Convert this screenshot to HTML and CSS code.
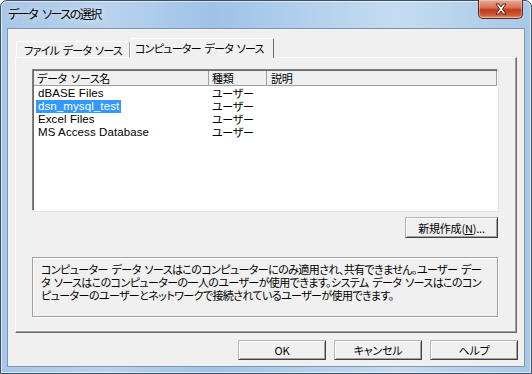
FILE: index.html
```html
<!DOCTYPE html>
<html lang="ja">
<head>
<meta charset="utf-8">
<title>データ ソースの選択</title>
<link rel="stylesheet" href="styles.css">
</head>
<body>
<div class="window">
  <div class="titlebar">
    <span class="title">データ ソースの選択</span>
    <div class="close">
      <svg width="18" height="12" viewBox="0 0 18 12"><path d="M4 1 L7 1 L9 4 L11 1 L14 1 L10.5 6 L14 11 L11 11 L9 8 L7 11 L4 11 L7.5 6 Z" fill="#fff" stroke="#5a1a10" stroke-width="1" stroke-linejoin="round"/></svg>
    </div>
  </div>
  <div class="client">
    <div class="tabs">
      <div class="tab">ファイル データ ソース</div>
      <div class="tab active">コンピューター データ ソース</div>
    </div>
    <div class="panel">
      <div class="listbox">
        <div class="lhead">
          <div class="c1">データ ソース名</div>
          <div class="c2">種類</div>
          <div class="c3">説明</div>
        </div>
        <div class="row"><div class="c1"><span>dBASE Files</span></div><div class="c2">ユーザー</div></div>
        <div class="row"><div class="c1"><span class="sel">dsn_mysql_test</span></div><div class="c2">ユーザー</div></div>
        <div class="row"><div class="c1"><span>Excel Files</span></div><div class="c2">ユーザー</div></div>
        <div class="row"><div class="c1"><span>MS Access Database</span></div><div class="c2">ユーザー</div></div>
      </div>
      <div class="newrow"><button class="btn newbtn">新規作成(<u>N</u>)...</button></div>
      <div class="desc">コンピューター データ ソースはこのコンピューターにのみ適用され、共有できません。ユーザー デー<br>タ ソースはこのコンピューターの一人のユーザーが使用できます。システム データ ソースはこのコン<br>ピューターのユーザーとネットワークで接続されているユーザーが使用できます。</div>
    </div>
    <div class="buttons">
      <button class="btn">OK</button>
      <button class="btn">キャンセル</button>
      <button class="btn">ヘルプ</button>
    </div>
  </div>
</div>
</body>
</html>
```
FILE: styles.css
```css
html, body {
  margin: 0;
  padding: 0;
  background: #fff;
}
body {
  width: 532px;
  height: 374px;
  overflow: hidden;
  font-family: "Noto Sans CJK JP", sans-serif;
  font-feature-settings: "palt";
  font-size: 11px;
  letter-spacing: -0.3px;
  word-spacing: 2px;
  color: #000;
}
.window {
  box-sizing: border-box;
  width: 532px;
  height: 374px;
  border: 1px solid #3d4f63;
  border-radius: 7px 7px 0 0;
  background: linear-gradient(90deg, #a7c6e6 0%, #b9d3ee 20%, #9fc2e6 40%, #b5d2ee 60%, #c4dcef 75%, #a8c8e8 100%);
  display: flex;
  flex-direction: column;
  box-shadow: inset 0 0 0 1px rgba(255,255,255,0.6);
}
.titlebar {
  height: 27px;
  display: flex;
  align-items: flex-start;
  justify-content: space-between;
  padding-left: 7px;
  padding-right: 8px;
}
.title {
  margin-top: 5px;
  font-size: 12px;
  letter-spacing: -1.5px;
  word-spacing: 4px;
  line-height: 16px;
  color: #000;
  text-shadow: 0 0 6px rgba(255,255,255,0.9);
}
.close {
  width: 43px;
  height: 18px;
  margin-top: -1px;
  border: 1px solid #5a2a22;
  border-top: none;
  border-radius: 0 0 5px 5px;
  background: linear-gradient(180deg, #e8a795 0%, #d8765c 40%, #c2391a 55%, #cf5b38 85%, #e59b72 100%);
  box-shadow: inset 0 0 0 1px rgba(255,255,255,0.35);
  display: flex;
  align-items: center;
  justify-content: center;
}
.close svg { display: block; }
.client {
  flex: 1;
  margin: 0 6px 6px 6px;
  border: 1px solid #7f95ab;
  background: #f0f0f0;
  padding: 9px 6px 0 7px;
  display: flex;
  flex-direction: column;
}
.tabs {
  display: flex;
  align-items: flex-end;
  height: 19px;
  padding-left: 1px;
}
.tab {
  height: 16px;
  line-height: 16px;
  padding: 0 7px 0 7px;
  border-top: 1px solid #fff;
  border-left: 1px solid #fff;
  border-right: 1px solid #a0a0a0;
  border-radius: 2px 2px 0 0;
  box-sizing: border-box;
  white-space: nowrap;
  letter-spacing: -0.75px;
}
.tab.active {
  height: 20px;
  line-height: 18px;
  padding: 0 9px 0 4px;
  margin-bottom: -1px;
  background: #f0f0f0;
  position: relative;
  z-index: 1;
  border-right: 1px solid #696969;
}
.panel {
  box-sizing: border-box;
  width: 502px;
  height: 276px;
  border-top: 1px solid #fff;
  border-left: 1px solid #fff;
  border-right: 1px solid #696969;
  border-bottom: 1px solid #696969;
  box-shadow: inset -1px -1px #a0a0a0;
  padding: 11px 0 0 16px;
}
.listbox {
  box-sizing: border-box;
  width: 466px;
  height: 142px;
  background: #fff;
  border-top: 1px solid #828282;
  border-left: 1px solid #828282;
  border-right: 1px solid #fff;
  border-bottom: 1px solid #fff;
  box-shadow: inset 1px 1px #696969, 1px 1px 0 #e3e3e3;
  overflow: hidden;
}
.lhead {
  display: flex;
  height: 15px;
  line-height: 14px;
  background: #f0f0f0;
  border-bottom: 1px solid #a0a0a0;
  box-sizing: border-box;
  margin: 1px 0 1px 1px;
  width: 463px;
}
.lhead > div {
  box-sizing: border-box;
  border-right: 1px solid #a0a0a0;
  padding-left: 3px;
  white-space: nowrap;
}
.c1 { width: 175px; }
.c2 { width: 58px; padding-left: 3px; }
.c3 { flex: 1; }
.lhead .c3 { padding-left: 4px; }
.row {
  display: flex;
  height: 13px;
  line-height: 13px;
  margin-left: 1px;
  white-space: nowrap;
}
.row .c1 {
  box-sizing: border-box;
  padding-left: 2px;
  font-family: "Liberation Sans", "Noto Sans CJK JP", sans-serif;
  font-size: 11.5px;
  letter-spacing: 0.1px;
  word-spacing: 0;
}
.row .c1 span { padding: 0 2px 0 2px; display: inline-block; height: 13px; }
.row .c2 { box-sizing: border-box; padding-left: 3px; }
.row .sel {
  background: #3399ff;
  color: #fff;
}
.newrow {
  width: 466px;
  display: flex;
  justify-content: flex-end;
  margin-top: 6px;
}
.btn {
  font-family: inherit;
  font-feature-settings: "palt";
  font-size: 11px;
  letter-spacing: -0.2px;
  color: #000;
  background: #f0f0f0;
  box-sizing: border-box;
  width: 88px;
  height: 20px;
  padding: 0;
  line-height: 16px;
  border: 1px solid;
  border-color: #b4b4b4 #404040 #404040 #b4b4b4;
  box-shadow: inset 1px 1px #fff, inset -1px -1px #a0a0a0;
  border-radius: 0;
}
.newbtn {
  width: 93px;
  height: 21px;
}
.desc {
  box-sizing: border-box;
  width: 466px;
  height: 60px;
  margin-top: 19px;
  border: 1px solid #a0a0a0;
  box-shadow: 1px 1px 0 #fff, inset 1px 1px 0 #fff;
  padding: 5px 0 0 8px;
  line-height: 13px;
  white-space: nowrap;
  letter-spacing: -0.6px;
}
.buttons {
  display: flex;
  justify-content: flex-end;
  gap: 8px;
  margin-top: 7px;
}
```
